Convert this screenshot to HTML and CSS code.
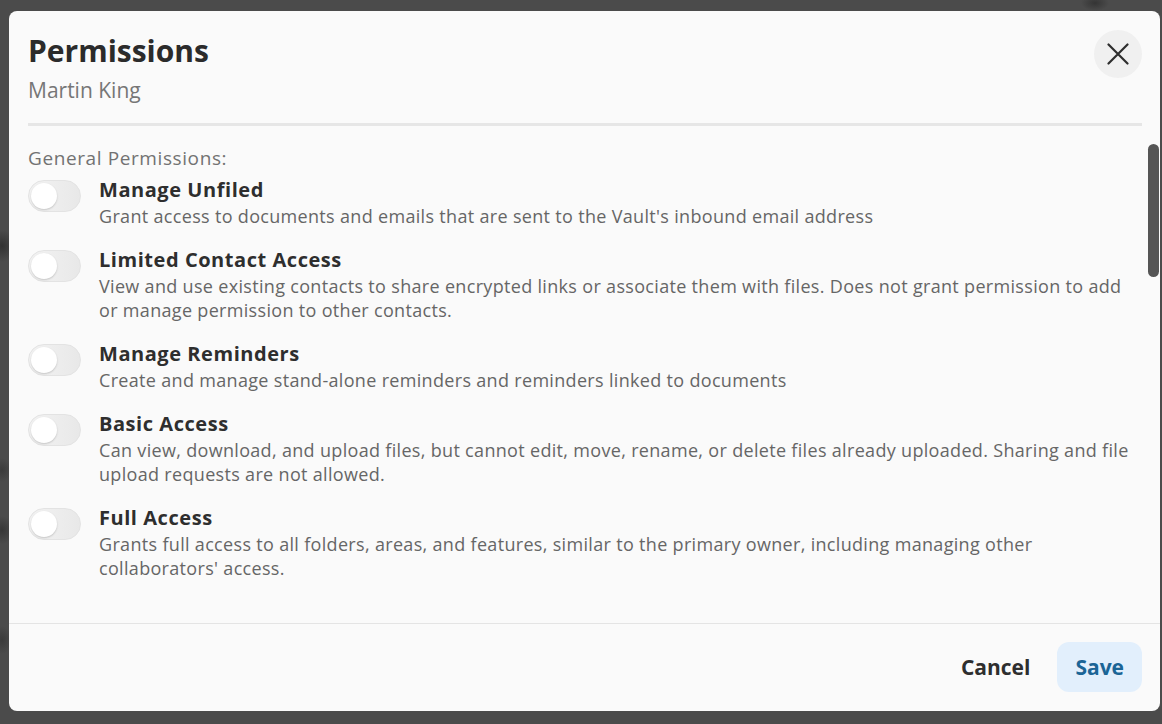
FILE: index.html
```html
<!DOCTYPE html>
<html lang="en">
<head>
<meta charset="utf-8">
<title>Permissions</title>
<link rel="stylesheet" href="styles.css">
</head>
<body>
<div class="backdrop">
  <div class="modal" role="dialog" aria-labelledby="dlg-title">
    <header class="modal-header">
      <div class="header-row">
        <div class="heading">
          <h1 class="title" id="dlg-title">Permissions</h1>
          <p class="subtitle">Martin King</p>
        </div>
        <button class="close-btn" type="button" aria-label="Close">
          <svg width="22" height="22" viewBox="0 0 22 22" aria-hidden="true">
            <path d="M1.5 1.5 L20.5 20.5 M20.5 1.5 L1.5 20.5" stroke="#2e2e2e" stroke-width="2.2" stroke-linecap="round" fill="none"/>
          </svg>
        </button>
      </div>
      <div class="header-divider"></div>
    </header>

    <div class="modal-body">
      <p class="section-label">General Permissions:</p>
      <ul class="perm-list">
        <li class="perm">
          <span class="toggle"><span class="knob"></span></span>
          <div class="perm-text">
            <h3 class="perm-title">Manage Unfiled</h3>
            <p class="perm-desc">Grant access to documents and emails that are sent to the Vault's inbound email address</p>
          </div>
        </li>
        <li class="perm">
          <span class="toggle"><span class="knob"></span></span>
          <div class="perm-text">
            <h3 class="perm-title">Limited Contact Access</h3>
            <p class="perm-desc">View and use existing contacts to share encrypted links or associate them with files. Does not grant permission to add or manage permission to other contacts.</p>
          </div>
        </li>
        <li class="perm">
          <span class="toggle"><span class="knob"></span></span>
          <div class="perm-text">
            <h3 class="perm-title">Manage Reminders</h3>
            <p class="perm-desc">Create and manage stand-alone reminders and reminders linked to documents</p>
          </div>
        </li>
        <li class="perm">
          <span class="toggle"><span class="knob"></span></span>
          <div class="perm-text">
            <h3 class="perm-title">Basic Access</h3>
            <p class="perm-desc">Can view, download, and upload files, but cannot edit, move, rename, or delete files already uploaded. Sharing and file upload requests are not allowed.</p>
          </div>
        </li>
        <li class="perm">
          <span class="toggle"><span class="knob"></span></span>
          <div class="perm-text">
            <h3 class="perm-title">Full Access</h3>
            <p class="perm-desc">Grants full access to all folders, areas, and features, similar to the primary owner, including managing other collaborators' access.</p>
          </div>
        </li>
      </ul>
      <div class="scroll-thumb" aria-hidden="true"></div>
    </div>

    <footer class="modal-footer">
      <button class="btn btn-cancel" type="button">Cancel</button>
      <button class="btn btn-save" type="button">Save</button>
    </footer>
  </div>
</div>
</body>
</html>
```

FILE: styles.css
```css
* {
  box-sizing: border-box;
}

html, body {
  margin: 0;
  padding: 0;
  height: 100%;
}

body {
  font-family: "Open Sans", "Noto Sans", "Liberation Sans", sans-serif;
  background-color: #4b4b4b;
  background-image:
    radial-gradient(ellipse 14px 16px at 2px 246px, rgba(30,30,30,0.55), rgba(30,30,30,0)),
    radial-gradient(ellipse 10px 12px at 2px 470px, rgba(30,30,30,0.35), rgba(30,30,30,0)),
    radial-gradient(ellipse 12px 14px at 2px 530px, rgba(30,30,30,0.45), rgba(30,30,30,0)),
    radial-gradient(ellipse 10px 14px at 2px 640px, rgba(30,30,30,0.35), rgba(30,30,30,0)),
    radial-gradient(ellipse 14px 8px at 1095px 3px, rgba(30,30,30,0.5), rgba(30,30,30,0));
  background-repeat: no-repeat;
  overflow: hidden;
}

.backdrop {
  padding: 11px 2px 13px 9px;
  height: 100%;
}

.modal {
  width: 1151px;
  height: 700px;
  background: #fafafa;
  border-radius: 8px;
  display: flex;
  flex-direction: column;
  overflow: hidden;
}

/* Header */
.modal-header {
  padding: 19px 18px 0 19px;
}

.header-row {
  display: flex;
  align-items: flex-start;
  justify-content: space-between;
}

.title {
  margin: 0;
  font-size: 30px;
  line-height: 41px;
  font-weight: 700;
  color: #2b2b2b;
}

.subtitle {
  margin: 4px 0 0;
  font-size: 21px;
  line-height: 30px;
  font-weight: 400;
  color: #767676;
}

.close-btn {
  width: 48px;
  height: 48px;
  border: none;
  border-radius: 50%;
  background: #f0f0f0;
  padding: 0;
  display: flex;
  align-items: center;
  justify-content: center;
  cursor: pointer;
}

.header-divider {
  margin-top: 18px;
  height: 3px;
  background: #e6e6e6;
}

/* Body */
.modal-body {
  position: relative;
  flex: 1;
  overflow: hidden;
  padding: 20px 24px 0 19px;
}

.section-label {
  margin: 0;
  font-size: 19px;
  line-height: 24px;
  letter-spacing: 0.6px;
  color: #727272;
}

.perm-list {
  list-style: none;
  margin: 6px 0 0;
  padding: 0;
  display: flex;
  flex-direction: column;
  gap: 18px;
}

.perm {
  display: flex;
  align-items: flex-start;
  gap: 18px;
}

.toggle {
  flex: none;
  width: 53px;
  height: 32px;
  margin-top: 4px;
  border-radius: 16px;
  border: 1px solid #e3e3e3;
  background: linear-gradient(to right, #f3f3f3, #e8e8e8);
  display: flex;
  align-items: center;
  padding-left: 2px;
}

.knob {
  width: 26px;
  height: 26px;
  border-radius: 50%;
  background: #ffffff;
  box-shadow: 0 1px 2px rgba(0, 0, 0, 0.18);
}

.perm-text {
  flex: 1;
  min-width: 0;
}

.perm-title {
  margin: 0;
  font-size: 20px;
  line-height: 28px;
  font-weight: 700;
  letter-spacing: 0.55px;
  color: #2e2e2e;
}

.perm-desc {
  margin: 0;
  font-size: 18px;
  line-height: 24px;
  letter-spacing: 0.32px;
  color: #666666;
}

.scroll-thumb {
  position: absolute;
  top: 18px;
  right: 1px;
  width: 11px;
  height: 133px;
  border-radius: 6px;
  background: #555555;
}

/* Footer */
.modal-footer {
  border-top: 1px solid #e4e4e4;
  padding: 18px 18px 19px;
  display: flex;
  justify-content: flex-end;
  gap: 9px;
}

.btn {
  height: 50px;
  padding: 0 18px;
  border: none;
  border-radius: 12px;
  font-family: inherit;
  font-size: 21px;
  font-weight: 700;
  cursor: pointer;
}

.btn-cancel {
  background: transparent;
  color: #2e2e2e;
}

.btn-save {
  background: #e2effc;
  color: #1b6596;
}
```
